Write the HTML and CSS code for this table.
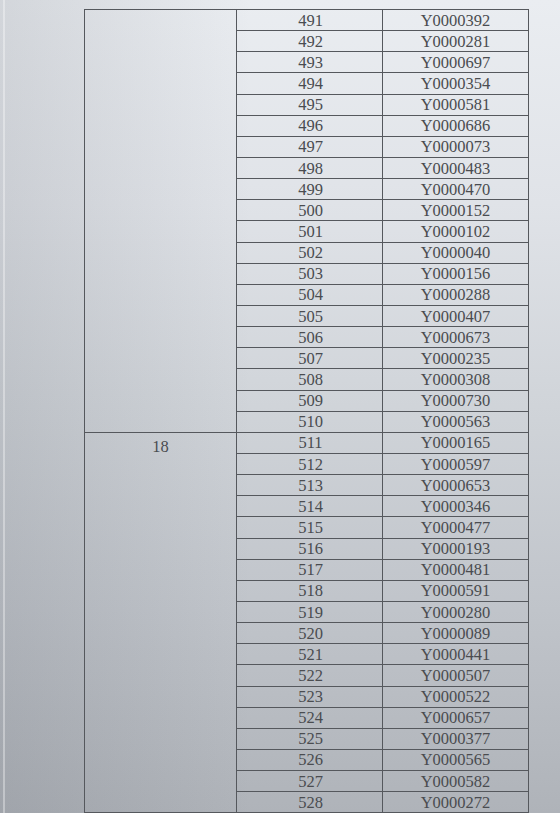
FILE: index.html
```html
<!DOCTYPE html>
<html lang="zh">
<head>
<meta charset="utf-8">
<title>名单</title>
<link rel="stylesheet" href="styles.css">
</head>
<body>
<div class="sheet">
<table class="list">
<colgroup><col class="c1"><col class="c2"><col class="c3"></colgroup>
<tbody>
<tr><td class="grp" rowspan="20"></td><td>491</td><td>Y0000392</td></tr>
<tr><td>492</td><td>Y0000281</td></tr>
<tr><td>493</td><td>Y0000697</td></tr>
<tr><td>494</td><td>Y0000354</td></tr>
<tr><td>495</td><td>Y0000581</td></tr>
<tr><td>496</td><td>Y0000686</td></tr>
<tr><td>497</td><td>Y0000073</td></tr>
<tr><td>498</td><td>Y0000483</td></tr>
<tr><td>499</td><td>Y0000470</td></tr>
<tr><td>500</td><td>Y0000152</td></tr>
<tr><td>501</td><td>Y0000102</td></tr>
<tr><td>502</td><td>Y0000040</td></tr>
<tr><td>503</td><td>Y0000156</td></tr>
<tr><td>504</td><td>Y0000288</td></tr>
<tr><td>505</td><td>Y0000407</td></tr>
<tr><td>506</td><td>Y0000673</td></tr>
<tr><td>507</td><td>Y0000235</td></tr>
<tr><td>508</td><td>Y0000308</td></tr>
<tr><td>509</td><td>Y0000730</td></tr>
<tr><td>510</td><td>Y0000563</td></tr>
<tr><td class="grp" rowspan="18">18</td><td>511</td><td>Y0000165</td></tr>
<tr><td>512</td><td>Y0000597</td></tr>
<tr><td>513</td><td>Y0000653</td></tr>
<tr><td>514</td><td>Y0000346</td></tr>
<tr><td>515</td><td>Y0000477</td></tr>
<tr><td>516</td><td>Y0000193</td></tr>
<tr><td>517</td><td>Y0000481</td></tr>
<tr><td>518</td><td>Y0000591</td></tr>
<tr><td>519</td><td>Y0000280</td></tr>
<tr><td>520</td><td>Y0000089</td></tr>
<tr><td>521</td><td>Y0000441</td></tr>
<tr><td>522</td><td>Y0000507</td></tr>
<tr><td>523</td><td>Y0000522</td></tr>
<tr><td>524</td><td>Y0000657</td></tr>
<tr><td>525</td><td>Y0000377</td></tr>
<tr><td>526</td><td>Y0000565</td></tr>
<tr><td>527</td><td>Y0000582</td></tr>
<tr><td>528</td><td>Y0000272</td></tr>
</tbody>
</table>
</div>
</body>
</html>
```
FILE: styles.css
```css
html, body {
  margin: 0;
  padding: 0;
}
body {
  width: 560px;
  height: 813px;
  overflow: hidden;
  background:
    linear-gradient(to right, rgba(255,255,255,0) 3px, rgba(255,255,255,0.35) 3px, rgba(255,255,255,0.35) 5px, rgba(255,255,255,0) 5px),
    linear-gradient(to right, rgba(70,75,85,0.14), rgba(70,75,85,0) 45%),
    linear-gradient(to bottom, #eaedf1 0%, #e0e3e8 25%, #d0d4d9 50%, #c0c4ca 75%, #afb3b9 100%);
  font-family: "Liberation Serif", "Noto Sans CJK SC", serif;
  color: #4a4c50;
}
.sheet {
  padding: 9px 0 0 84px;
}
.list {
  border-collapse: collapse;
  table-layout: fixed;
  width: 444px;
  font-size: 16.5px;
}
.c1 { width: 152px; }
.c2 { width: 146px; }
.c3 { width: 146px; }
.list tr {
  height: 21.15px;
}
.list td {
  border: 1px solid #55585d;
  padding: 0;
  text-align: center;
  vertical-align: middle;
  line-height: 19px;
}
.list td:nth-last-child(2) {
  padding-left: 2px;
}
.list td.grp {
  vertical-align: top;
  padding: 4px 0 0;
}
```
